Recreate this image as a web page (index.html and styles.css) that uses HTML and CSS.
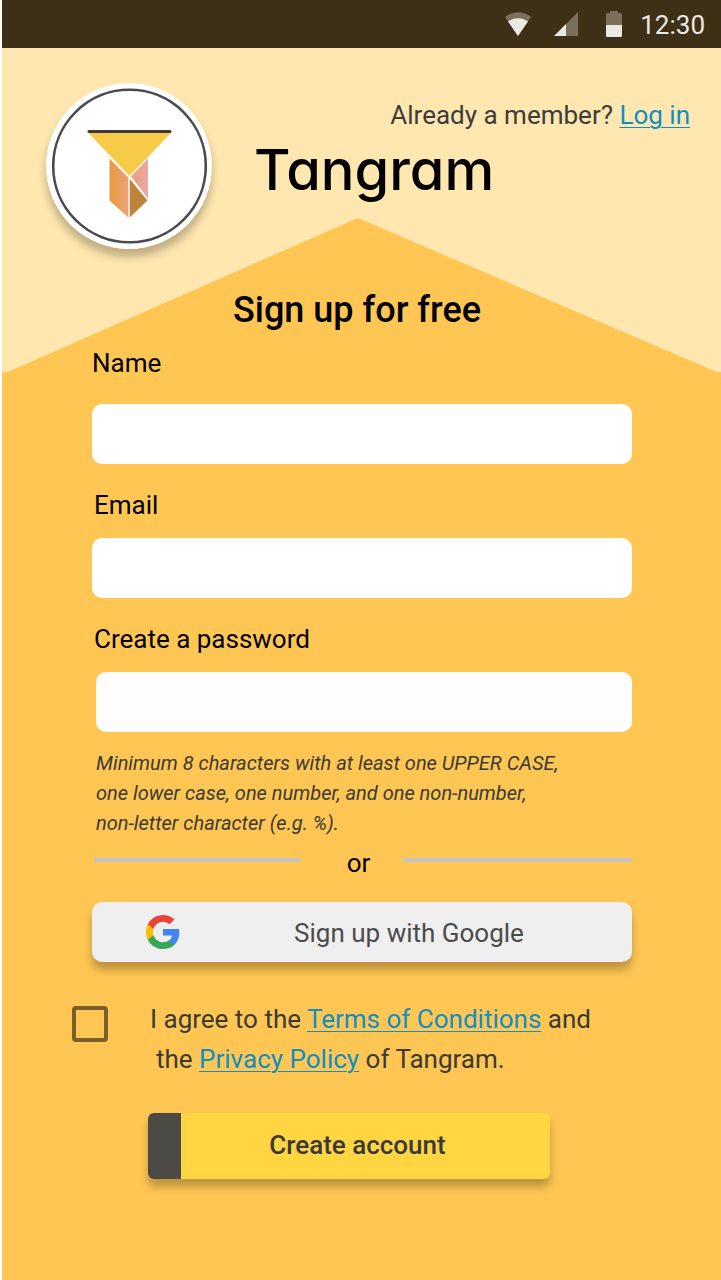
FILE: index.html
```html
<!DOCTYPE html>
<html lang="en">
<head>
<meta charset="utf-8">
<meta name="viewport" content="width=device-width, initial-scale=1">
<title>Tangram – Sign up</title>
<link rel="stylesheet" href="styles.css">
</head>
<body>
<div class="screen">
  <div class="status-bar">
    <svg class="status-wifi" viewBox="0 0 28 24" aria-hidden="true">
      <path class="icon-dim" d="M14 24 1 5C8-1.400 20-1.400 27 5Z"/>
      <path class="icon-lit" d="M14 24 4 9.500C10 5 18 5 24 9.500Z"/>
    </svg>
    <svg class="status-signal" viewBox="0 0 24 24" aria-hidden="true">
      <path class="icon-dim" d="M24 0V24H12V12Z"/>
      <path class="icon-lit" d="M12 12V24H0Z"/>
    </svg>
    <svg class="status-battery" viewBox="0 0 16 26" aria-hidden="true">
      <path class="icon-dim" d="M0 14V3.500Q0 2 1.500 2H4V0H12V2H14.500Q16 2 16 3.500V14Z"/>
      <path class="icon-lit" d="M0 14H16V24.500Q16 26 14.500 26H1.500Q0 26 0 24.500Z"/>
    </svg>
    <span class="status-time">12:30</span>
  </div>

  <div class="content">
    <header class="header">
      <svg class="logo" viewBox="0 0 166 166" role="img" aria-label="Tangram logo">
        <defs>
          <linearGradient id="orange"><stop offset="0" stop-color="#ea9a3c"/><stop offset="1" stop-color="#eca27a"/></linearGradient>
          <linearGradient id="pink"><stop offset="0" stop-color="#eb9f78"/><stop offset="1" stop-color="#eba8a6"/></linearGradient>
        </defs>
        <circle cx="83" cy="83" r="83" fill="#fff"/>
        <circle cx="83.500" cy="83" r="76.300" fill="none" stroke="#4b4b4d" stroke-width="2.600"/>
        <path d="M42.500 50H125L83.500 93Z" fill="#f5cb48"/>
        <path d="M43 48.600H124" stroke="#3d3b38" stroke-width="3" stroke-linecap="round"/>
        <path d="M63.500 75.500 82.300 94.500V134.500L63.500 117.500Z" fill="url(#orange)"/>
        <path d="M102 75.500V115.500L85 93.500Z" fill="url(#pink)"/>
        <path d="M83.700 96 101.500 117.500 83.700 134.500Z" fill="#bd843c"/>
      </svg>
      <div class="header-text">
        <p class="login">Already a member? <a class="link" href="#login">Log in</a></p>
        <h1 class="brand">Tangram</h1>
      </div>
    </header>

    <form class="form">
      <h2 class="title">Sign up for free</h2>
      <div class="field field-name">
        <label class="label" for="name">Name</label>
        <input class="input" id="name" type="text">
      </div>
      <div class="field">
        <label class="label label-inset" for="email">Email</label>
        <input class="input" id="email" type="email">
      </div>
      <div class="field field-password">
        <label class="label label-inset" for="password">Create a password</label>
        <input class="input" id="password" type="password" aria-describedby="hint">
      </div>
      <p class="hint" id="hint">Minimum 8 characters with at least one UPPER CASE,<br>one lower case, one number, and one non-number,<br>non-letter character (e.g. %).</p>
      <div class="divider"><span>or</span></div>
      <button class="google" type="button">
        <svg class="google-icon" viewBox="2 2 44 44" aria-hidden="true">
          <path fill="#4285f4" d="M45.120 24.500c0-1.560-.14-3.060-.4-4.500H24v8.510h11.840c-.51 2.750-2.060 5.080-4.390 6.640v5.520h7.110c4.160-3.830 6.560-9.470 6.560-16.170z"/>
          <path fill="#34a853" d="M24 46c5.940 0 10.920-1.970 14.560-5.330l-7.110-5.520c-1.970 1.320-4.490 2.100-7.450 2.100-5.730 0-10.580-3.870-12.310-9.070H4.340v5.700C7.960 41.070 15.400 46 24 46z"/>
          <path fill="#fbbc05" d="M11.690 28.180C11.250 26.860 11 25.450 11 24s.25-2.860.69-4.180v-5.700H4.340C2.850 17.090 2 20.450 2 24s.85 6.910 2.340 9.880l7.350-5.700z"/>
          <path fill="#ea4335" d="M24 10.750c3.230 0 6.130 1.110 8.410 3.290l6.310-6.310C34.910 4.180 29.930 2 24 2 15.400 2 7.960 6.930 4.340 14.120l7.350 5.700c1.730-5.200 6.580-9.070 12.310-9.070z"/>
        </svg>
        <span class="google-text">Sign up with Google</span>
      </button>
      <div class="consent">
        <input class="checkbox" id="agree" type="checkbox">
        <label class="consent-text" for="agree">I agree to the <a class="link" href="#terms">Terms of Conditions</a> and<br><span class="consent-second">the <a class="link" href="#privacy">Privacy Policy</a> of Tangram.</span></label>
      </div>
      <button class="create" type="submit">Create account</button>
    </form>
  </div>
</div>
</body>
</html>
```
FILE: styles.css
```css
* { box-sizing: border-box; }

body {
  margin: 0;
  background: #fff;
  color: #000;
  font-family: Roboto, "Liberation Sans", sans-serif;
  font-size: 26px;
  line-height: 30px;
}

p, h1, h2 { margin: 0; }

button { font: inherit; border: 0; cursor: pointer; }

.screen {
  margin-left: 2px;
  min-height: 100vh;
  background: #ffc653;
}

.status-bar {
  display: flex;
  align-items: center;
  justify-content: flex-end;
  height: 48px;
  padding-right: 16px;
  background: #3e3016;
  color: #ece9e4;
}

.status-wifi { width: 28px; height: 24px; margin-right: 22px; }
.status-signal { width: 24px; height: 24px; margin-right: 28px; }
.status-battery { width: 16px; height: 26px; margin-right: 18px; }
.status-time { padding-top: 2px; }
.icon-dim { fill: #7c705c; }
.icon-lit { fill: #ece9e4; }

.content {
  position: relative;
  isolation: isolate;
  padding-bottom: 40px;
}

.content::before {
  content: "";
  position: absolute;
  inset: 0 0 auto 0;
  z-index: -1;
  height: 325px;
  background: #ffe7af;
  clip-path: polygon(0 0, 100% 0, 100% 324px, 99.400% 324px, 49.500% 170px, 0.800% 324px, 0 324px);
}

.header {
  display: flex;
  gap: 42px;
  padding: 35px 31px 0 44px;
}

.logo {
  flex: none;
  width: 166px;
  height: 166px;
  border-radius: 50%;
  box-shadow: 0 8px 8px rgba(0, 0, 0, 0.25);
}

.header-text { flex: 1; padding-top: 17px; }
.login { text-align: right; color: #3c3c3c; }

.link {
  color: #0f8fc4;
  text-decoration: underline;
  text-decoration-thickness: 1px;
  text-underline-offset: 3px;
}

.brand {
  font-family: Inter, Lato, sans-serif;
  font-feature-settings: "cv11";
  font-size: 56px;
  font-weight: 500;
  line-height: 80px;
}

.form {
  display: flex;
  flex-direction: column;
  padding: 40px 89px 0 90px;
}

.title {
  margin-bottom: 17px;
  padding-right: 10px;
  text-align: center;
  font-size: 36px;
  font-weight: 500;
  line-height: 42px;
}

.field {
  display: flex;
  flex-direction: column;
  gap: 18px;
  margin-bottom: 26px;
}

.field-name { gap: 26px; }
.field-password { margin-bottom: 16px; }
.label-inset { padding-left: 2px; }

.input {
  height: 60px;
  padding: 0 16px;
  border: 0;
  border-radius: 10px;
  background: #fff;
  font: inherit;
}

.field-password .input { margin-left: 4px; background: #fffcfd; }

.hint {
  margin: 0 0 10px 4px;
  color: #3a3a35;
  font-size: 20px;
  font-style: italic;
}

.divider {
  display: flex;
  align-items: center;
  padding-left: 2px;
}

.divider::before,
.divider::after {
  content: "";
  height: 4px;
  margin-bottom: 6px;
  background: #c4c4c4;
}

.divider::before { flex: 206; margin-right: 47px; }
.divider::after { flex: 229; margin-left: 33px; }

.google {
  display: flex;
  align-items: center;
  height: 60px;
  margin-top: 24px;
  padding: 0 54px;
  border-radius: 10px;
  background: #efefef;
  color: #4b4b4b;
  box-shadow: 0 8px 8px rgba(0, 0, 0, 0.25);
}

.google-icon { width: 34px; height: 34px; }
.google-text { flex: 1; padding: 2px 0 0 60px; text-align: center; }

.consent {
  display: flex;
  align-items: flex-start;
  gap: 42px;
  margin: 37px 0 34px -20px;
}

.checkbox {
  appearance: none;
  flex: none;
  width: 36px;
  height: 36px;
  margin: 7px 0 0;
  border: 4px solid #7a5f28;
  border-radius: 4px;
}

.checkbox:checked { background: #7a5f28; }

.consent-text { color: #3a3a35; line-height: 40px; }
.consent-second { padding-left: 6px; }

.create {
  height: 66px;
  margin: 0 82px 0 56px;
  padding: 0 16px 2px 0;
  border-left: 33px solid #4b4a44;
  border-radius: 6px;
  background: #ffd541;
  color: #393939;
  font-weight: 500;
  box-shadow: 0 8px 8px rgba(0, 0, 0, 0.25);
}
```
